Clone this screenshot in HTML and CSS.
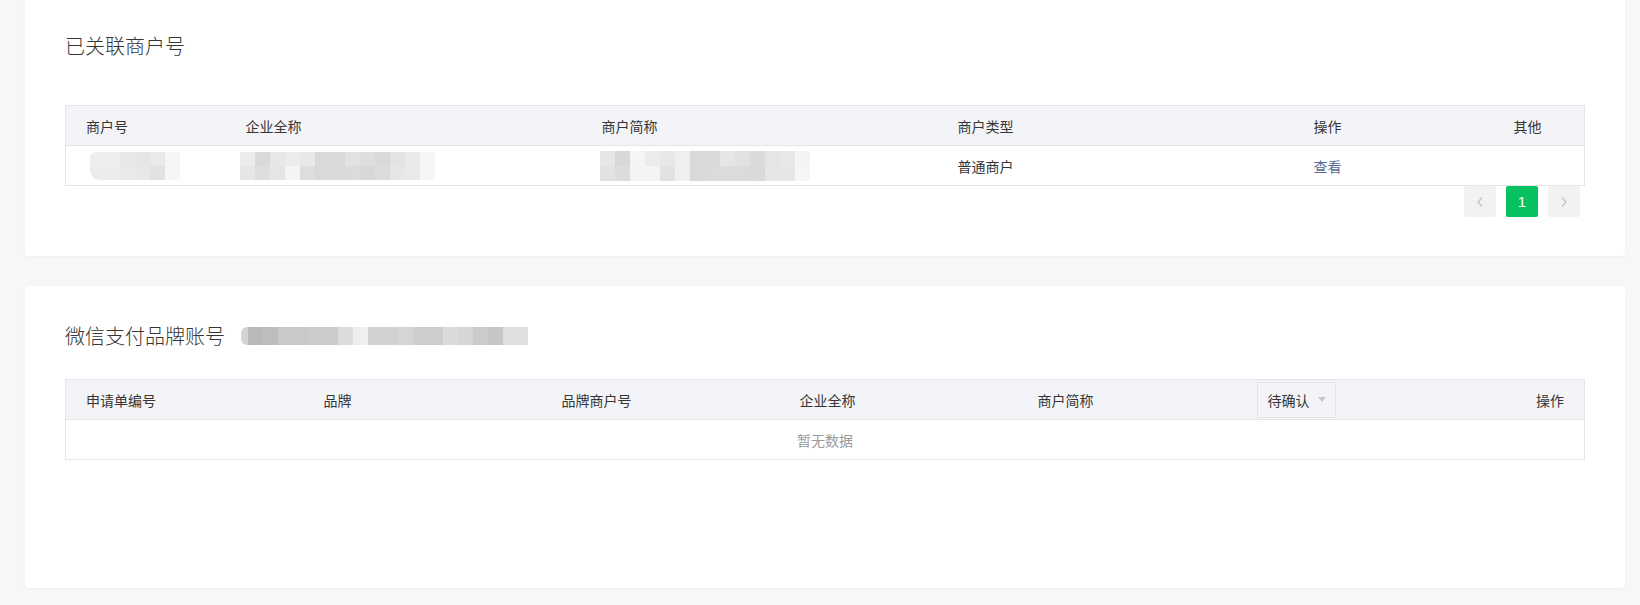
FILE: index.html
```html
<!DOCTYPE html>
<html lang="zh-CN">
<head>
<meta charset="utf-8">
<title>商户号</title>
<link rel="stylesheet" href="styles.css">
</head>
<body>
<div class="page">
  <section class="card card-first">
    <h2 class="card-title title-gap-lg">已关联商户号</h2>
    <table class="grid grid-merchant">
      <colgroup>
        <col class="w160"><col class="w356"><col class="w356"><col class="w356"><col class="w200"><col>
      </colgroup>
      <thead>
        <tr><th>商户号</th><th>企业全称</th><th>商户简称</th><th>商户类型</th><th>操作</th><th>其他</th></tr>
      </thead>
      <tbody>
        <tr>
          <td class="mosaic-cell"><span class="mosaic mosaic-a"></span></td>
          <td class="mosaic-cell"><span class="mosaic mosaic-b"></span></td>
          <td class="mosaic-cell"><span class="mosaic mosaic-c"></span></td>
          <td>普通商户</td>
          <td><a class="link">查看</a></td>
          <td></td>
        </tr>
      </tbody>
    </table>
    <div class="pager">
      <button class="pg pg-arrow" type="button"><svg width="8" height="12" viewBox="0 0 8 12"><path d="M6 1.5 2 6l4 4.5" fill="none" stroke="#c2c2c2" stroke-width="1.2"/></svg></button>
      <button class="pg pg-active" type="button">1</button>
      <button class="pg pg-arrow" type="button"><svg width="8" height="12" viewBox="0 0 8 12"><path d="M2 1.5 6 6l-4 4.5" fill="none" stroke="#c2c2c2" stroke-width="1.2"/></svg></button>
    </div>
  </section>

  <section class="card card-second">
    <h2 class="card-title title-gap-sm">微信支付品牌账号<span class="mosaic mosaic-title"></span></h2>
    <table class="grid grid-brand">
      <colgroup>
        <col class="w238"><col class="w238"><col class="w238"><col class="w238"><col class="w238"><col class="w150"><col>
      </colgroup>
      <thead>
        <tr>
          <th>申请单编号</th><th>品牌</th><th>品牌商户号</th><th>企业全称</th><th>商户简称</th>
          <th class="filter-cell"><span class="filter">待确认<i class="caret"></i></span></th>
          <th class="right">操作</th>
        </tr>
      </thead>
      <tbody>
        <tr><td class="empty" colspan="7">暂无数据</td></tr>
      </tbody>
    </table>
  </section>
</div>
</body>
</html>
```

FILE: styles.css
```css
* { box-sizing: border-box; }
html, body { margin: 0; padding: 0; }
body {
  background: #f6f7f9;
  font-family: "Noto Sans CJK SC", "Noto Sans", sans-serif;
  color: #353535;
  font-size: 14px;
  width: 1640px;
  height: 605px;
  overflow: hidden;
}
.page {
  padding: 0 15px 17px 25px;
  display: flex;
  flex-direction: column;
  gap: 30px;
}
.card {
  background: #fff;
  border-radius: 4px;
  box-shadow: 0 1px 3px rgba(0, 0, 0, 0.035);
  padding: 36px 40px 0 40px;
}
.card-first {
  margin-top: -4px;
  height: 260px;
  border-top-left-radius: 0;
  border-top-right-radius: 0;
}
.card-second { height: 302px; }

.card-title {
  margin: 0;
  font-size: 20px;
  font-weight: 300;
  line-height: 28px;
  height: 28px;
  color: #353535;
  display: flex;
  align-items: center;
}
.title-gap-lg { margin-bottom: 45px; }
.title-gap-sm { margin-bottom: 29px; }

.grid {
  width: 1520px;
  border-collapse: collapse;
  table-layout: fixed;
  border: 1px solid #e4e5e9;
}
.w160 { width: 160px; }
.w200 { width: 200px; }
.w356 { width: 356px; }
.w238 { width: 238px; }
.w150 { width: 150px; }

.grid th, .grid td {
  height: 40px;
  padding: 0 0 0 20px;
  text-align: left;
  font-weight: normal;
  font-size: 14px;
  line-height: 20px;
  color: #353535;
  white-space: nowrap;
  vertical-align: middle;
}
.grid thead th {
  background: #f3f4f8;
  border-bottom: 1px solid #e4e5e9;
}
.grid th.right { text-align: right; padding: 0 20px 0 0; }
.link { color: #576b95; cursor: pointer; }
.empty { text-align: center !important; padding: 0 !important; color: #9a9a9a !important; }

.mosaic-cell { padding-left: 24px !important; }
.grid td.mosaic-cell:nth-child(2) { padding-left: 14px !important; }
.grid td.mosaic-cell:nth-child(3) { padding-left: 18px !important; }

.mosaic {
  display: inline-block;
  vertical-align: middle;
  background-repeat: no-repeat;
  background-size: 100% 50%;
  background-position: top, bottom;
}
.mosaic-a {
  width: 90px; height: 28px;
  background-image:
    linear-gradient(to right, #eeeeee 0 30px, #e8e8e8 30px 45px, #e6e6e6 45px 60px, #e9e9e9 60px 75px, #f6f6f6 75px 90px),
    linear-gradient(to right, #ececec 0 30px, #eaeaea 30px 45px, #e8e8e8 45px 60px, #e2e2e2 60px 75px, #f6f6f6 75px 90px);
  border-radius: 6px 0 0 10px;
}
.mosaic-b {
  width: 195px; height: 28px;
  background-image:
    linear-gradient(to right, #ececec 0 15px, #d9d9d9 15px 30px, #e7e7e7 30px 45px, #ebebeb 45px 60px, #e8e8e8 60px 75px, #d9d9d9 75px 105px, #e2e2e2 105px 120px, #dedede 120px 135px, #d9d9d9 135px 150px, #e3e3e3 150px 165px, #eaeaea 165px 180px, #f6f6f6 180px 195px),
    linear-gradient(to right, #e6e6e6 0 15px, #dedede 15px 30px, #e5e5e5 30px 45px, #f4f4f4 45px 60px, #dddddd 60px 75px, #d9d9d9 75px 105px, #dbdbdb 105px 120px, #d8d8d8 120px 135px, #dcdcdc 135px 150px, #e6e6e6 150px 165px, #e9e9e9 165px 180px, #f6f6f6 180px 195px);
}
.mosaic-c {
  width: 210px; height: 30px;
  background-image:
    linear-gradient(to right, #e6e6e6 0 15px, #d8d8d8 15px 30px, #f5f5f5 30px 45px, #ebebeb 45px 60px, #e7e7e7 60px 75px, #efefef 75px 90px, #d9d9d9 90px 120px, #e6e6e6 120px 135px, #e1e1e1 135px 150px, #dadada 150px 165px, #e5e5e5 165px 180px, #e8e8e8 180px 195px, #f4f4f4 195px 210px),
    linear-gradient(to right, #e2e2e2 0 15px, #dcdcdc 15px 30px, #f4f4f4 30px 60px, #e2e2e2 60px 75px, #efefef 75px 90px, #d9d9d9 90px 105px, #dbdbdb 105px 150px, #dadada 150px 165px, #e6e6e6 165px 195px, #f6f6f6 195px 210px);
}
.mosaic-title {
  margin-left: 16px;
  width: 287px; height: 18px;
  background-size: 100% 100%;
  border-radius: 6px 0 0 6px;
  background-image:
    linear-gradient(to right, #d4d4d4 0 7px, #b9b9b9 7px 22px, #bdbdbd 22px 37px, #c9c9c9 37px 67px, #cbcbcb 67px 97px, #dcdcdc 97px 112px, #efefef 112px 127px, #d2d2d2 127px 157px, #d5d5d5 157px 172px, #cdcdcd 172px 202px, #dadada 202px 217px, #d6d6d6 217px 232px, #cbcbcb 232px 247px, #c6c6c6 247px 262px, #dfdfdf 262px 287px);
}

.filter-cell { padding-left: 1px !important; }
.filter {
  display: inline-flex;
  align-items: center;
  height: 36px;
  width: 79px;
  padding-left: 10px;
  border: 1px solid #e4e5e9;
  background: #f3f4f8;
  color: #353535;
}
.caret {
  margin-left: 8px;
  width: 0; height: 0;
  border-left: 4.5px solid transparent;
  border-right: 4.5px solid transparent;
  border-top: 5px solid #c8c8c8;
}

.pager {
  display: flex;
  justify-content: flex-end;
  gap: 10px;
  padding-right: 5px;
  margin-top: 0;
}
.pg {
  width: 32px;
  height: 31px;
  border: 0;
  border-radius: 2px;
  padding: 0;
  display: flex;
  align-items: center;
  justify-content: center;
  font-family: "Liberation Sans", Arial, sans-serif;
  font-size: 15px;
}
.pg-arrow { background: #f2f2f2; }
.pg-active { background: #07c160; color: #fff; }
```
